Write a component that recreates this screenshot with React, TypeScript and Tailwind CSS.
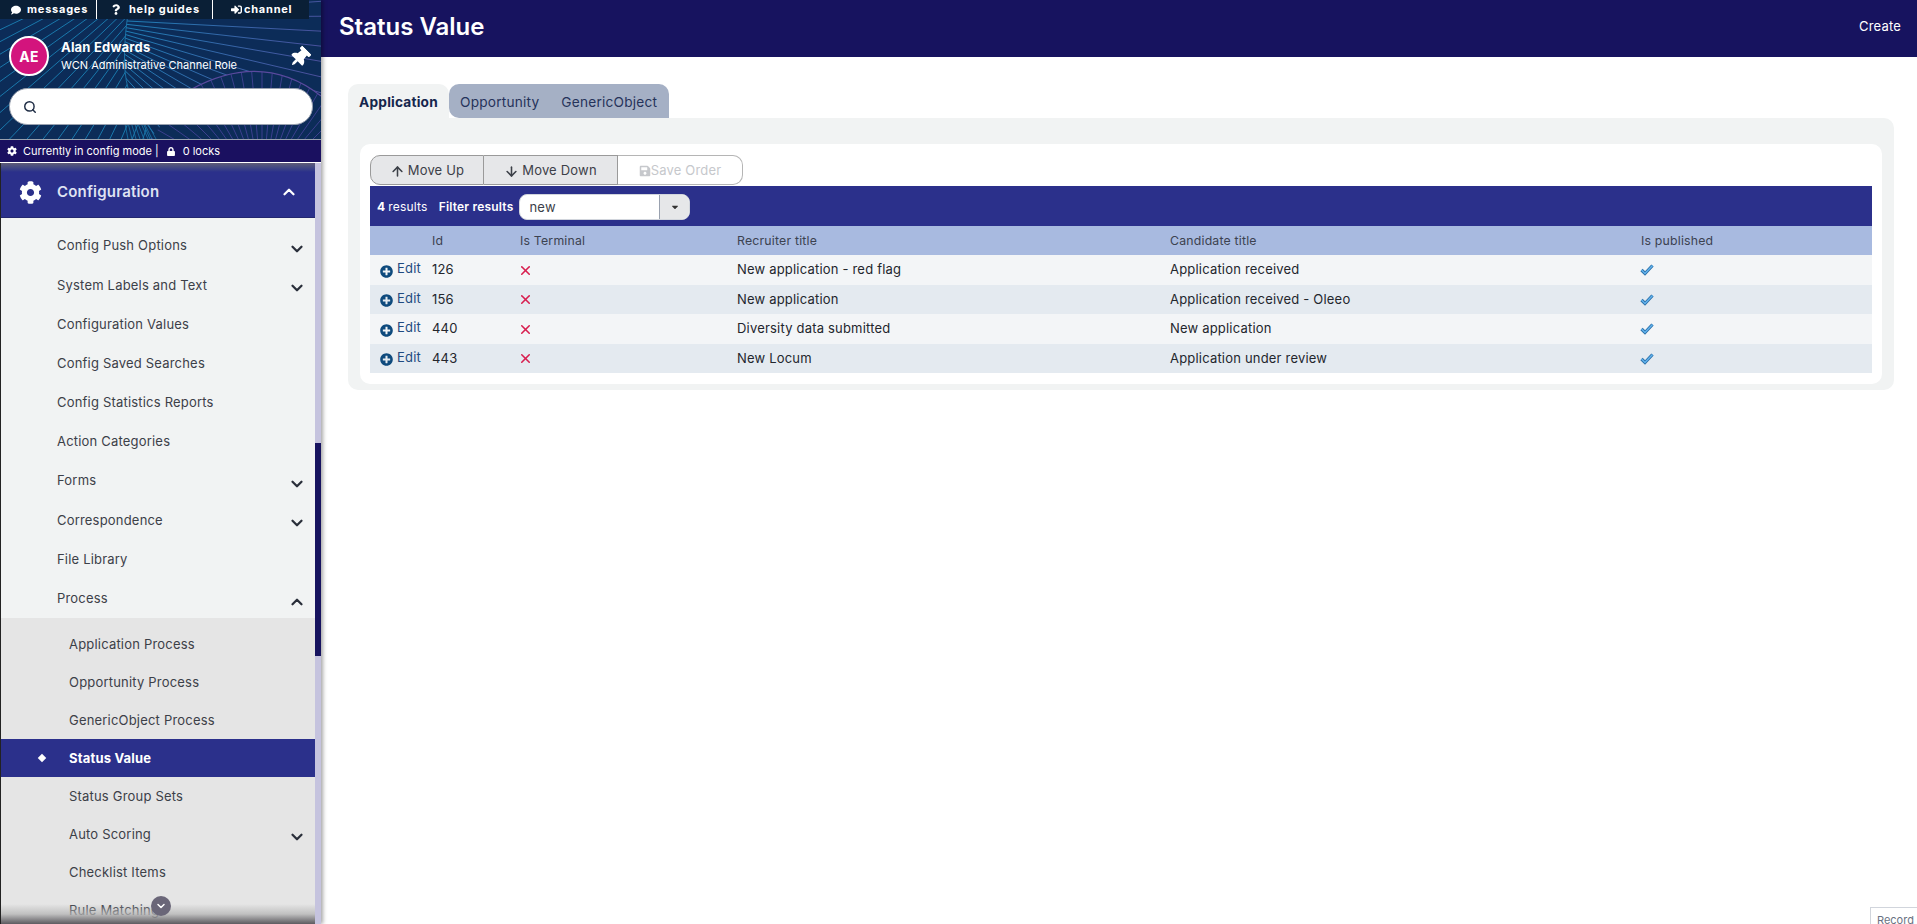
import React from "react";
import { ChevronDown, ChevronUp, ArrowUp, ArrowDown, X, Search } from "lucide-react";
import { FaCog, FaComment, FaQuestion, FaLock, FaThumbtack, FaSave, FaPlusCircle, FaSignInAlt, FaCaretDown } from "react-icons/fa";

const items: [string, ("down" | "up" | null)][] = [
  ["Config Push Options", "down"],
  ["System Labels and Text", "down"],
  ["Configuration Values", null],
  ["Config Saved Searches", null],
  ["Config Statistics Reports", null],
  ["Action Categories", null],
  ["Forms", "down"],
  ["Correspondence", "down"],
  ["File Library", null],
  ["Process", "up"],
];

const subItems: [string, boolean, boolean][] = [
  ["Application Process", false, false],
  ["Opportunity Process", false, false],
  ["GenericObject Process", false, false],
  ["Status Value", true, false],
  ["Status Group Sets", false, false],
  ["Auto Scoring", false, true],
  ["Checklist Items", false, false],
  ["Rule Matching", false, false],
];

const rows = [
  ["126", "New application - red flag", "Application received", "bg-[#f3f5f7]", "h-[30px]"],
  ["156", "New application", "Application received - Oleeo", "bg-[#e4eaf0]", "h-[29px]"],
  ["440", "Diversity data submitted", "New application", "bg-[#f3f5f7]", "h-[30px]"],
  ["443", "New Locum", "Application under review", "bg-[#e4eaf0]", "h-[29px]"],
];

function HeaderArt() {
  const leftFan = Array.from({ length: 30 }, (_, i) => {
    const a = (Math.PI / 180) * (100 + i * 2.6);
    return { x: 210 + Math.cos(a) * 420, y: -70 + Math.sin(a) * 420 };
  });
  const rightFan = Array.from({ length: 24 }, (_, i) => {
    const a = (Math.PI / 180) * (-14 + i * 3.4);
    return { x: 70 + Math.cos(a) * 340, y: 18 + Math.sin(a) * 340 };
  });
  const under = Array.from({ length: 30 }, (_, i) => {
    const a = (Math.PI / 180) * (200 + i * 5);
    return { x: 262 + Math.cos(a) * 150, y: 190 + Math.sin(a) * 150 };
  });
  const bottomFan = Array.from({ length: 8 }, (_, i) => ({ x: 128 + i * 4, y: 139, tx: 118 + i * 1.5 }));
  return (
    <svg className="absolute inset-0" width="321" height="139" viewBox="0 0 321 139" fill="none">
      <defs>
        <clipPath id="leftClip">
          <path d="M0 0 H130 Q120 60 128 88 L150 139 H0 Z" />
        </clipPath>
        <clipPath id="topClip">
          <path d="M130 0 H321 V96 Q262 50 190 90 L150 139 L128 88 Q120 60 130 0 Z" />
        </clipPath>
        <clipPath id="arcClip">
          <path d="M150 139 L190 90 Q262 50 321 96 V139 Z" />
        </clipPath>
        <linearGradient id="fanGrad" gradientUnits="userSpaceOnUse" x1="130" y1="0" x2="321" y2="60">
          <stop offset="0" stopColor="#1d7fb5" />
          <stop offset="1" stopColor="#4a4f9c" />
        </linearGradient>
      </defs>
      <g clipPath="url(#leftClip)" stroke="#1a78ab" strokeWidth="1">
        {leftFan.map((p, i) => (
          <line key={i} x1="210" y1="-70" x2={p.x} y2={p.y} />
        ))}
      </g>
      <g clipPath="url(#topClip)" stroke="url(#fanGrad)" strokeWidth="1">
        {rightFan.map((p, i) => (
          <line key={i} x1="70" y1="18" x2={p.x} y2={p.y} />
        ))}
      </g>
      <g clipPath="url(#arcClip)" stroke="#3c3f8e" strokeWidth="1">
        {under.map((p, i) => (
          <line key={i} x1="262" y1="190" x2={p.x} y2={p.y} />
        ))}
      </g>
      <path d="M190 90 Q262 50 321 96" stroke="#5a4a9e" strokeWidth="1.2" />
      <path d="M130 0 Q120 60 128 88 L150 139" stroke="#1d7fb5" strokeWidth="0.8" />
      {bottomFan.map((b, i) => (
        <line key={i} x1={b.tx} y1="88" x2={b.x} y2={b.y} stroke="#1a78ab" strokeWidth="0.8" />
      ))}
    </svg>
  );
}

function Check() {
  return (
    <svg width="14" height="12" viewBox="0 0 14 12" fill="none" className="-ml-px">
      <polyline points="1.5,6 5,9.5 12.5,1.5" stroke="#2b6fa8" strokeWidth="3.2" />
      <polyline points="1.5,6 5,9.5 12.5,1.5" stroke="#62b4ee" strokeWidth="1.4" />
    </svg>
  );
}

export default function App() {
  return (
    <div className="flex h-[924px] w-full overflow-hidden bg-white font-['Inter','Liberation_Sans',sans-serif] text-[13px] tracking-[0.015em]">
      <aside className="relative z-10 flex h-full w-[321px] shrink-0 flex-col shadow-[2px_0_4px_rgba(0,0,0,0.35)]">
        <div className="relative h-[139px] shrink-0 overflow-hidden bg-[#0c2c58]">
          <HeaderArt />
          <div className="relative flex h-[19px] w-[309px] items-center bg-[#0a1f36] text-[11px] font-bold tracking-[0.07em] text-white">
            <div className="flex h-full w-[97px] items-center border-r border-white pl-[11px]">
              <FaComment className="mr-[6px] h-[10px] w-[10px]" />
              messages
            </div>
            <div className="flex h-full w-[116px] items-center border-r border-white pl-[15px]">
              <FaQuestion className="mr-[9px] h-[11px] w-[8px]" />
              help guides
            </div>
            <div className="flex h-full flex-1 items-center pl-[18px]">
              <FaSignInAlt className="mr-[2px] h-[11px] w-[11px]" />
              channel
            </div>
          </div>
          <div className="relative flex h-[69px] items-center pl-[9px] pr-[11px] pt-[5px] text-white">
            <div className="flex h-[40px] w-[40px] items-center justify-center rounded-full border-2 border-white bg-[#d3147d] text-[14px] font-bold">AE</div>
            <div className="ml-[12px] flex-1 leading-none">
              <div className="text-[13px] font-bold">Alan Edwards</div>
              <div className="mt-[6px] text-[11px] tracking-normal">WCN Administrative Channel Role</div>
            </div>
            <FaThumbtack className="mt-[3px] h-[21px] w-[21px] rotate-45" />
          </div>
          <div className="relative mx-[9px] flex h-[37px] w-[304px] items-center rounded-full border border-gray-400 bg-white pl-[13px] text-[#1f2d45]">
            <Search className="h-[14px] w-[14px]" strokeWidth={2.5} />
          </div>
        </div>
        <div className="flex h-[24px] shrink-0 items-center border-y border-y-white border-t-gray-400 bg-[#1a1060] pl-[7px] text-[11px] tracking-normal text-white">
          <FaCog className="mr-[6px] h-[10px] w-[10px]" />
          <span>Currently in config mode |</span>
          <FaLock className="ml-[8px] mr-[8px] h-[9px] w-[8px]" />
          <span>0 locks</span>
        </div>
        <div className="relative flex min-h-0 flex-1 border-l border-l-[#222]">
          <div className="relative w-[314px] overflow-hidden bg-[#f1f3f3]">
            <div className="h-[9px] bg-gradient-to-b from-[#5f5c78] to-[#2b308b]" />
            <div className="flex h-[46px] items-center border-b border-[#23276f] bg-[#2b308b] pb-[5px] pl-[18px] pr-[17px] text-[#dfe2f2]">
              <FaCog className="h-[23px] w-[23px] text-white" />
              <span className="ml-[15px] flex-1 text-[15px] font-semibold">Configuration</span>
              <ChevronUp className="h-[18px] w-[18px] text-white" strokeWidth={3} />
            </div>
            <div className="h-[8.5px]" />
            {items.map(([label, chev]) => (
              <div key={label} className="flex h-[39.2px] items-center pl-[56px] pr-[9px] text-[#3c4048]">
                <span className="flex-1">{label}</span>
                {chev === "down" && <ChevronDown className="mt-[6px] h-[18px] w-[18px] text-[#2a2f3a]" strokeWidth={3} />}
                {chev === "up" && <ChevronUp className="mt-[6px] h-[18px] w-[18px] text-[#2a2f3a]" strokeWidth={3} />}
              </div>
            ))}
            <div className="bg-[#e5e5e5] pt-[7px]">
              {subItems.map(([label, active, chev]) => (
                <div key={label} className={`flex h-[38px] items-center pl-[68px] pr-[9px] ${active ? "relative bg-[#2b308b] font-bold text-white" : "text-[#3c4048]"}`}>
                  {active && <span className="absolute left-[38px] top-[16px] h-[6px] w-[6px] rotate-45 bg-white" />}
                  <span className="flex-1">{label}</span>
                  {chev && <ChevronDown className="mt-[6px] h-[18px] w-[18px] text-[#2a2f3a]" strokeWidth={3} />}
                </div>
              ))}
            </div>
            <div className="absolute inset-x-0 bottom-0 h-[20px] bg-gradient-to-b from-[rgba(229,229,229,0)] via-[rgba(180,180,180,0.75)] to-[#5d5b60]" />
            <div className="absolute bottom-[8px] left-[150px] flex h-[20px] w-[20px] items-center justify-center rounded-full bg-[#6a6678] text-white">
              <ChevronDown className="h-[12px] w-[12px]" strokeWidth={3} />
            </div>
          </div>
          <div className="w-[6px] bg-[#c5c3de] pt-[280px]">
            <div className="h-[213px] bg-[#17135f]" />
          </div>
        </div>
      </aside>

      <main className="flex min-w-0 flex-1 flex-col">
        <header className="flex h-[57px] shrink-0 items-center justify-between bg-[#17135f] pb-[3px] pl-[18px] pr-[16px] text-white">
          <h1 className="text-[24px] font-semibold tracking-normal">Status Value</h1>
          <span className="text-[13px]">Create</span>
        </header>
        <div className="relative flex-1 pl-[27px] pr-[23px] pt-[27px]">
          <div className="flex h-[34px] text-[13.7px]">
            <div className="flex w-[101px] items-center justify-center rounded-t-[10px] bg-[#f1f3f3] pt-[2px] font-bold text-[#15264d]">Application</div>
            <div className="flex w-[220px] items-center rounded-[10px] rounded-br-none bg-[#a5b0c5] pl-[11px] pt-[2px] text-[#25335a]">
              <span>Opportunity</span>
              <span className="ml-[22px]">GenericObject</span>
            </div>
          </div>
          <div className="rounded-b-[10px] rounded-tr-[10px] bg-[#f1f3f3] px-[12px] pb-[6px] pt-[26px]">
            <div className="rounded-[10px] bg-white pb-[11px] pl-[10px] pr-[10px] pt-[11px]">
              <div className="flex h-[30px] w-[373px] text-[#3c4048]">
                <button className="flex w-[114px] items-center justify-center gap-[3px] rounded-l-[10px] border border-[#9a9a9a] bg-[#e6e7e9] pt-[2px]">
                  <ArrowUp className="h-[15px] w-[15px]" strokeWidth={2.5} />
                  Move Up
                </button>
                <button className="flex w-[134px] items-center justify-center gap-[3px] border-y border-r border-[#9a9a9a] bg-[#e6e7e9] pt-[2px]">
                  <ArrowDown className="h-[15px] w-[15px]" strokeWidth={2.5} />
                  Move Down
                </button>
                <button className="flex flex-1 items-center justify-center rounded-r-[10px] border-y border-r border-[#b5b5b5] bg-white pt-[2px] text-[#c6c8cc]">
                  <FaSave className="h-[12px] w-[12px]" />
                  Save Order
                </button>
              </div>
              <div className="mt-px flex h-[40px] items-center bg-[#2b308b] pl-[7px] pt-[1px] text-[12px] text-white">
                <span className="font-bold">4</span>
                <span className="ml-[3px]">results</span>
                <span className="ml-[11px] font-semibold">Filter results</span>
                <div className="ml-[6px] flex h-[26px] w-[171px] overflow-hidden rounded-[8px] border border-gray-300 bg-white text-[13px] text-[#3c4048]">
                  <span className="flex flex-1 items-center pl-[9px] pt-[2px]">new</span>
                  <span className="flex w-[30px] items-center justify-center border-l border-gray-400 bg-[#e6e7e9]">
                    <FaCaretDown className="h-[10px] w-[10px] text-[#333]" />
                  </span>
                </div>
              </div>
              <table className="w-full table-fixed border-collapse text-left">
                <colgroup>
                  <col className="w-[61px]" />
                  <col className="w-[88px]" />
                  <col className="w-[218px]" />
                  <col className="w-[433px]" />
                  <col className="w-[471px]" />
                  <col />
                </colgroup>
                <thead>
                  <tr className="h-[29px] bg-[#a8bae0] text-[12.3px] text-[#3c4250]">
                    <th className="pt-[2px] font-normal" />
                    <th className="pl-px pt-[2px] font-normal">Id</th>
                    <th className="pl-px pt-[2px] font-normal">Is Terminal</th>
                    <th className="pt-[2px] font-normal">Recruiter title</th>
                    <th className="pt-[2px] font-normal">Candidate title</th>
                    <th className="pt-[2px] font-normal">Is published</th>
                  </tr>
                </thead>
                <tbody className="text-[#23262d]">
                  {rows.map((r) => (
                    <tr key={r[0]} className={`${r[3]} ${r[4]}`}>
                      <td className="pl-[10px]">
                        <span className="flex items-center gap-[4px] text-[#1f4a80]">
                          <FaPlusCircle className="mt-[2px] h-[13px] w-[13px] text-[#0e4a7d]" />
                          <span className="-mt-[2px]">Edit</span>
                        </span>
                      </td>
                      <td className="pl-px">{r[0]}</td>
                      <td>
                        <X className="-ml-[1px] h-[15px] w-[15px] text-[#d81e4f]" strokeWidth={2.5} />
                      </td>
                      <td>{r[1]}</td>
                      <td>{r[2]}</td>
                      <td>
                        <Check />
                      </td>
                    </tr>
                  ))}
                </tbody>
              </table>
            </div>
          </div>
          <div className="absolute bottom-0 right-0 h-[17px] w-[47px] overflow-hidden border-l border-t border-gray-300 pl-[6px] pt-[5px] text-[11px] leading-[14px] tracking-normal text-gray-500">Record</div>
        </div>
      </main>
    </div>
  );
}
